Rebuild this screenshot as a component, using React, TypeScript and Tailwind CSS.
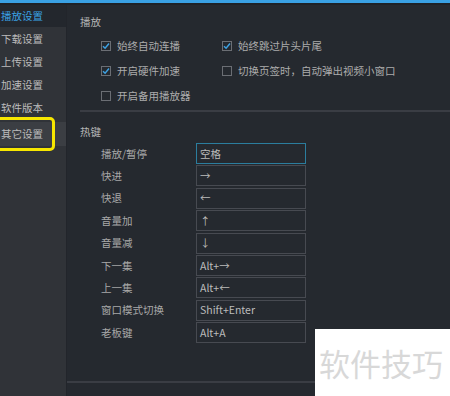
import React from "react";

const font = { fontFamily: '"Noto Sans CJK SC", "Noto Sans", sans-serif' };

function Check({ checked, label }: { checked: boolean; label: string }) {
  return (
    <div className="flex items-center h-[25px]">
      <div className="w-[10px] h-[10px] border border-[#6b6e74] flex items-center justify-center">
        {checked && (
          <svg width="8" height="8" viewBox="0 0 8 8">
            <path d="M1 4.2 L3.1 6.2 L7 1.6" stroke="#3ea2e3" strokeWidth="1.5" fill="none" />
          </svg>
        )}
      </div>
      <span className="ml-[6px] text-[10.5px] leading-[14px] text-[#acacac]">{label}</span>
    </div>
  );
}

const hotkeys: [string, string][] = [
  ["播放/暂停", "空格"],
  ["快进", "→"],
  ["快退", "←"],
  ["音量加", "↑"],
  ["音量减", "↓"],
  ["下一集", "Alt+→"],
  ["上一集", "Alt+←"],
  ["窗口模式切换", "Shift+Enter"],
  ["老板键", "Alt+A"],
];

export default function App() {
  return (
    <div className="relative w-[450px] h-[396px] overflow-hidden bg-[#25292f] flex flex-col" style={font}>
      <div className="h-[3px] bg-[#3aa1e4] shrink-0" />
      <div className="h-[2px] bg-[#1f2227] shrink-0" />
      <div className="flex flex-1 min-h-0">
        {/* sidebar */}
        <div className="w-[66px] shrink-0 flex flex-col">
          <div className="h-[22px] bg-[#23272d] flex items-center pl-[1px] text-[10.5px] text-[#3aa1e4]">播放设置</div>
          <div className="flex-1 bg-[#303338] flex flex-col text-[10.5px] text-[#bcbcbc]">
            <div className="h-[23px] flex items-center pl-[1px]">下载设置</div>
            <div className="h-[23px] flex items-center pl-[1px]">上传设置</div>
            <div className="h-[23px] flex items-center pl-[1px]">加速设置</div>
            <div className="h-[23px] flex items-center pl-[1px]">软件版本</div>
            <div className="mt-[3px] h-[24px] flex items-center pl-[1px] bg-[#3b3e43]">其它设置</div>
          </div>
        </div>
        {/* content */}
        <div className="flex-1 flex flex-col border-l border-[#22252b]">
          <div className="pl-[13px] pt-[10px]">
            <div className="text-[10.5px] leading-[14px] text-[#b4b4b4]">播放</div>
            <div className="pl-[21px] pt-[4px] grid grid-cols-[121px_1fr]">
              <Check checked label="始终自动连播" />
              <Check checked label="始终跳过片头片尾" />
              <Check checked label="开启硬件加速" />
              <Check checked={false} label="切换页签时，自动弹出视频小窗口" />
              <Check checked={false} label="开启备用播放器" />
            </div>
            <div className="h-[2px] bg-[#3a3d44] mt-[2px]" />
            <div className="text-[10.5px] leading-[14px] text-[#b4b4b4] mt-[13px]">热键</div>
            <div className="pl-[21px] mt-[4px] flex flex-col gap-[1.375px]">
              {hotkeys.map(([k, v], i) => (
                <div key={k} className="flex items-center h-[21px]">
                  <div className="w-[95px] text-[10.5px] text-[#a8a8a8]">{k}</div>
                  <div
                    className={
                      "w-[110px] h-[21px] flex items-center pl-[3px] text-[10.5px] text-[#bcbcbc] border " +
                      (i === 0 ? "border-[#2b7d9e]" : "border-[#474a51]")
                    }
                  >
                    {v}
                  </div>
                </div>
              ))}
            </div>
          </div>
          <div className="h-[2px] bg-[#3a3d44] mt-[38px] shrink-0" />
          <div className="pl-[13px] pt-[11px] text-[10.5px] leading-[14px] text-[#b4b4b4]">外观主题与界面设置</div>
        </div>
      </div>

      {/* yellow annotation */}
      <div className="absolute left-[-8px] top-[117px] w-[63px] h-[34px] border-[3px] border-[#f6e600] rounded-[5px]" />

      {/* watermark */}
      <div className="absolute left-[315px] top-[329px] w-[135px] h-[67px] bg-white flex items-center pl-[4px]">
        <span className="text-[31px] leading-none text-[#d8d8d8]">软件技巧</span>
      </div>
    </div>
  );
}
